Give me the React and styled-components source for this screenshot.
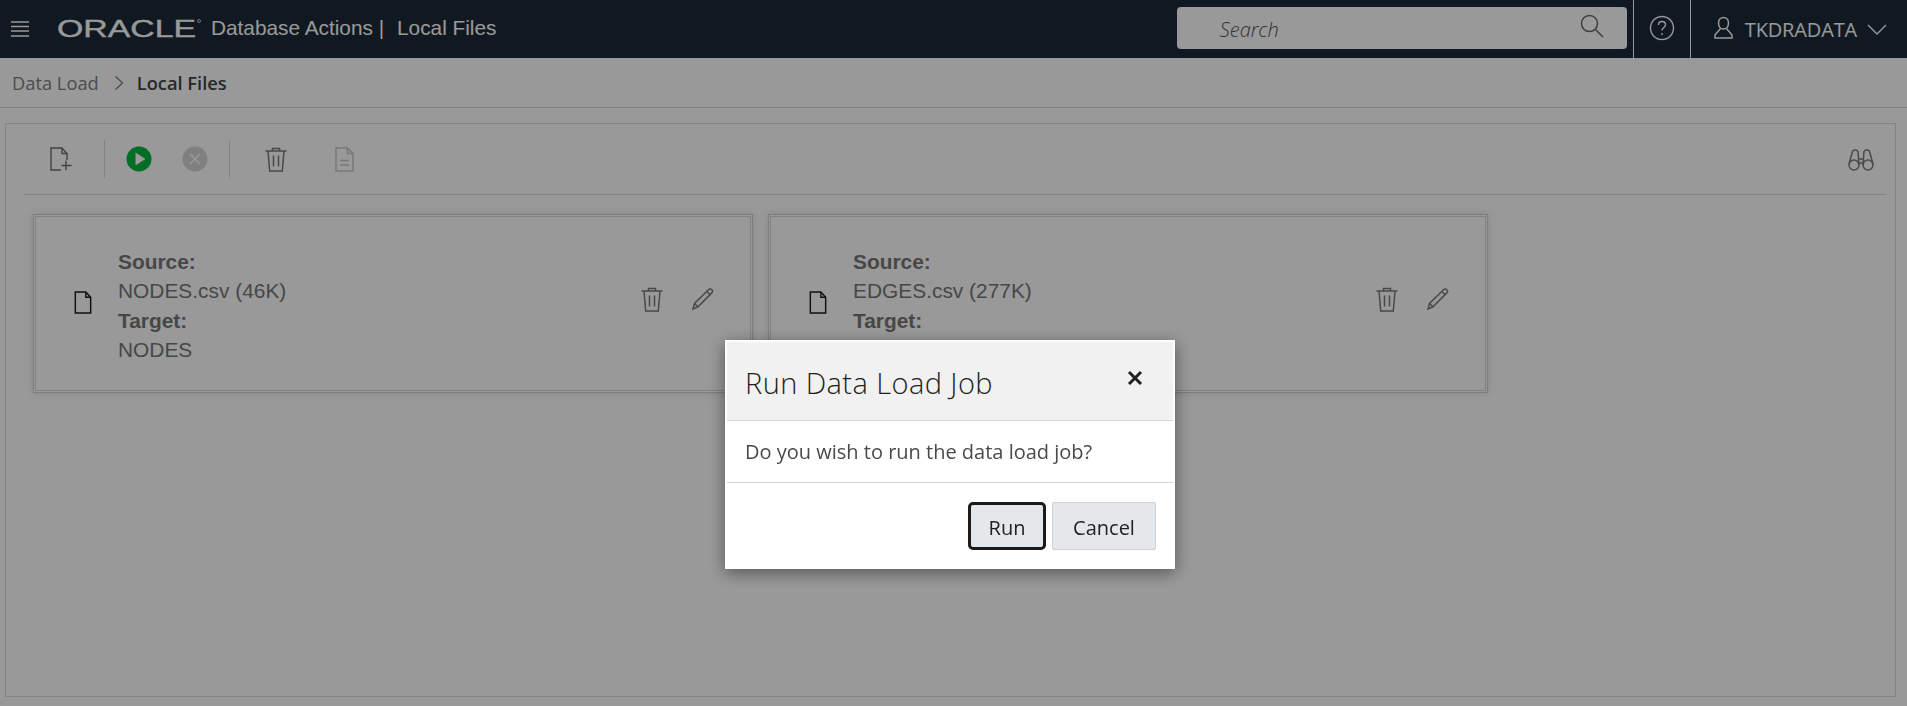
import styled, { createGlobalStyle } from "styled-components";

const GlobalStyle = createGlobalStyle`
    html, body {
        margin: 0;
        padding: 0;
        height: 100%;
        background-color: #fff;
    }
    body {
        font-family: "Open Sans", "Noto Sans", sans-serif;
        overflow: hidden;
    }
    * {
        box-sizing: border-box;
    }
`;

const Page = styled("div")`
    display: flex;
    flex-direction: column;
    height: 706px;
`;

const Header = styled("header")`
    display: flex;
    align-items: center;
    flex: 0 0 58px;
    background-color: #1c2938;
    color: #fff;
`;

const MenuIcon = styled("svg")`
    width: 18px;
    height: 16px;
    margin: 0 28px 0 11px;
`;

const Logo = styled("svg")`
    width: 146px;
    height: 24px;
    margin-right: 8px;
    margin-top: -3px;
`;

const AppTitle = styled("span")`
    font-family: "Liberation Sans", Arial, sans-serif;
    font-size: 20.8px;
    white-space: pre;
    margin-top: -3px;
`;

const PageName = styled("span")`
    margin-left: 13px;
`;

const Spacer = styled("div")`
    flex: 1;
`;

const SearchBox = styled("div")`
    display: flex;
    align-items: center;
    justify-content: space-between;
    width: 450px;
    height: 42px;
    padding: 2px 23px 0 43px;
    margin: -2px 6px 0 0;
    background-color: #fff;
    border-radius: 4px;
    color: #555;
    font-size: 20px;
    font-style: italic;
    font-weight: 300;
`;

const SearchIcon = styled("svg")`
    width: 24px;
    height: 24px;
    margin-top: -6px;
`;

const HeaderCell = styled("div")`
    display: flex;
    align-items: center;
    height: 58px;
    border-left: 1px solid #fff;
    padding: ${(props) => props.$padding};
`;

const HeaderGlyph = styled("svg")`
    margin-top: -2px;
`;

const UserName = styled("span")`
    font-size: 20px;
    margin: 0 10px 0 12px;
    letter-spacing: -0.15px;
`;

const Breadcrumb = styled("nav")`
    display: flex;
    align-items: center;
    flex: 0 0 50px;
    padding: 0 0 0 12px;
    border-bottom: 1px solid #d9d9d9;
    font-size: 18.3px;
`;

const Crumb = styled("span")`
    color: ${(props) => (props.$current ? "#444" : "#808080")};
    font-weight: ${(props) => (props.$current ? 600 : 400)};
`;

const CrumbIcon = styled("svg")`
    width: 10px;
    height: 16px;
    margin: 0 13px 0 15px;
`;

const Panel = styled("main")`
    flex: 1;
    margin: 15px 11px 9px 5px;
    padding: 0 9px 0 17px;
    border: 1px solid #dcdcdc;
`;

const Toolbar = styled("div")`
    display: flex;
    align-items: center;
    height: 71px;
    border-bottom: 1px solid #dcdcdc;
`;

const ToolSlot = styled("div")`
    display: flex;
    align-items: center;
    justify-content: center;
    width: ${(props) => props.$width}px;
    padding-right: ${(props) => props.$right || 0}px;
`;

const ToolDivider = styled("div")`
    width: 1px;
    height: 38px;
    background-color: #dcdcdc;
`;

const Binoculars = styled("svg")`
    width: 26px;
    height: 23px;
    margin-right: 12px;
`;

const CardRow = styled("div")`
    display: flex;
    gap: 15px;
    padding: 19px 0 0 10px;
`;

const Card = styled("section")`
    position: relative;
    display: flex;
    align-items: center;
    width: 720px;
    height: 179px;
    padding: 0 38px 0 40px;
    border: 1px solid #d0d0d0;
    outline: 1px solid #d8d8d8;
    outline-offset: -3px;
    box-shadow: 0 0 8px rgba(0, 0, 0, 0.12);
`;

const DocWrap = styled("div")`
    display: flex;
    margin-top: -2px;
`;

const CardText = styled("div")`
    flex: 1;
    margin: 4px 0 0 26px;
    font-family: "Liberation Sans", Arial, sans-serif;
    font-size: 20.9px;
    line-height: 29.3px;
    color: #777;
`;

const Label = styled("div")`
    font-weight: 700;
    color: #777;
`;

const CardActions = styled("div")`
    display: flex;
    align-items: center;
    gap: 29px;
    margin-top: -9px;
`;

const Overlay = styled("div")`
    position: fixed;
    inset: 0;
    background-color: rgba(0, 0, 0, 0.4);
`;

const Dialog = styled("div")`
    position: fixed;
    left: 725px;
    top: 340px;
    width: 450px;
    height: 229px;
    border: 2px solid #fff;
    background-color: #fff;
    box-shadow: 0 4px 16px rgba(0, 0, 0, 0.45);
    color: #2b2b2b;
`;

const DialogHeader = styled("div")`
    display: flex;
    align-items: center;
    justify-content: space-between;
    height: 79px;
    padding: 2px 30px 0 18px;
    background-color: #f1f1f1;
    border-bottom: 1px solid #d6d6d6;
`;

const DialogTitle = styled("h2")`
    margin: 0;
    font-size: 29px;
    font-weight: 300;
    letter-spacing: 0.42px;
    color: #1f1f1f;
`;

const CloseIcon = styled("svg")`
    width: 16px;
    height: 16px;
    margin-top: -8px;
`;

const DialogBody = styled("div")`
    display: flex;
    align-items: center;
    height: 62px;
    padding-left: 18px;
    border-bottom: 1px solid #d6d6d6;
    font-size: 20px;
    color: #4a4a4a;
`;

const DialogFooter = styled("div")`
    display: flex;
    justify-content: flex-end;
    gap: 6px;
    padding: 19px 17px 0 0;
`;

const DialogButton = styled("button")`
    height: 48px;
    width: ${(props) => props.$width}px;
    padding: 2px 0 0;
    border: ${(props) => (props.$focused ? "3px solid #1b1b1b" : "1px solid #d0d4d8")};
    border-radius: ${(props) => (props.$focused ? "5px" : "2px")};
    background-color: #e4e8eb;
    color: #222;
    font-family: inherit;
    font-size: 20px;
`;

function Doc({ color = "#777" }) {
    return (
        <svg width="18" height="23" viewBox="0 0 18 24" fill="none" stroke={color} strokeWidth="1.5">
            <path d="M1 1h11l5 5.500V23H1z" />
            <path d="M12 1v5.500h5" />
        </svg>
    );
}

function DocPlus() {
    return (
        <svg width="22" height="24" viewBox="0 0 22 24" fill="none" stroke="#6e6e6e" strokeWidth="1.4">
            <path d="M11 23H1V1h11l5 5.500V13" />
            <path d="M12 1v5.500h5M16 13.500v9.500M11.500 18.500h10" />
        </svg>
    );
}

function DocLines() {
    return (
        <svg width="19" height="25" viewBox="0 0 19 25" fill="none" stroke="#c8c8c8" strokeWidth="1.5">
            <path d="M1 1h11.500l5.500 5.500V24H1z" />
            <path d="M12.500 1v5.500H18M5 13.500h9M5 18h9" />
        </svg>
    );
}

function Trash() {
    return (
        <svg width="22" height="25" viewBox="0 0 22 25" fill="none" stroke="#7a7a7a" strokeWidth="1.5">
            <path d="M0.500 4h21M7.500 4V1.500h7V4M3 4l1.700 20h12.600L19 4M8.500 8.500v11M13.500 8.500v11" />
        </svg>
    );
}

function Pencil() {
    return (
        <svg width="22" height="22" viewBox="0 0 22 22" fill="none" stroke="#7a7a7a" strokeWidth="1.5">
            <path d="M1 21l1.500-5.500L16.500 1.800c1-1 2.500-1 3.300-.1.900.9.900 2.300 0 3.200L6 18.800z" />
            <path d="M15 3.500l3.500 3.500M2.500 15.500L6 18.800" />
        </svg>
    );
}

function FileCard({ source, target }) {
    return (
        <Card>
            <DocWrap>
                <Doc color="#1a1a1a" />
            </DocWrap>
            <CardText>
                <Label>Source:</Label>
                <div>{source}</div>
                <Label>Target:</Label>
                <div>{target}</div>
            </CardText>
            <CardActions>
                <Trash />
                <Pencil />
            </CardActions>
        </Card>
    );
}

function App() {
    return (
        <Page>
            <GlobalStyle />
            <Header>
                <MenuIcon viewBox="0 0 18 16" stroke="#fff" strokeWidth="1.3">
                    <path d="M0 1h18M0 5.500h18M0 10h18M0 15h18" />
                </MenuIcon>
                <Logo viewBox="0 0 146 24">
                    <text
                        x="0"
                        y="20.500"
                        fontFamily="'Liberation Sans', Arial, sans-serif"
                        fontSize="23.500"
                        fill="#fff"
                        stroke="#fff"
                        strokeWidth="0.35"
                        textLength="139"
                        lengthAdjust="spacingAndGlyphs"
                    >
                        ORACLE
                    </text>
                    <circle cx="142" cy="5" r="1.500" fill="none" stroke="#fff" strokeWidth="0.7" />
                </Logo>
                <AppTitle>
                    Database Actions |<PageName>Local Files</PageName>
                </AppTitle>
                <Spacer />
                <SearchBox>
                    <span>Search</span>
                    <SearchIcon viewBox="0 0 24 24" fill="none" stroke="#666" strokeWidth="1.5">
                        <circle cx="9.500" cy="9.500" r="8" />
                        <path d="M15.500 15.500L23 23" />
                    </SearchIcon>
                </SearchBox>
                <HeaderCell $padding="0 15px 0 15px">
                    <HeaderGlyph width="26" height="26" viewBox="0 0 26 26" fill="none" stroke="#fff" strokeWidth="1.4">
                        <circle cx="13" cy="13" r="11.500" />
                        <path d="M9.500 10c0-2 1.500-3.500 3.500-3.500s3.500 1.500 3.500 3.300c0 2.700-3.500 2.700-3.500 5.700" />
                        <path d="M13 18v2" />
                    </HeaderGlyph>
                </HeaderCell>
                <HeaderCell $padding="0 20px 0 23px">
                    <HeaderGlyph width="19" height="24" viewBox="0 0 19 24" fill="none" stroke="#fff" strokeWidth="1.5">
                        <path d="M9.500 1.500c3 0 5 2.300 5 5.500s-2 6-5 6-5-2.800-5-6 2-5.500 5-5.500z" />
                        <path d="M6.500 12.500L1 19v3h17v-3l-5.500-6.500" />
                    </HeaderGlyph>
                    <UserName>TKDRADATA</UserName>
                    <svg width="20" height="11" viewBox="0 0 20 11" fill="none" stroke="#fff" strokeWidth="1.4">
                        <path d="M1 1l9 9 9-9" />
                    </svg>
                </HeaderCell>
            </Header>
            <Breadcrumb>
                <Crumb>Data Load</Crumb>
                <CrumbIcon viewBox="0 0 10 16" fill="none" stroke="#777" strokeWidth="1.2">
                    <path d="M1.500 1.500L8.500 8l-7 6.500" />
                </CrumbIcon>
                <Crumb $current>Local Files</Crumb>
            </Breadcrumb>
            <Panel>
                <Toolbar>
                    <ToolSlot $width={81} $right={6}>
                        <DocPlus />
                    </ToolSlot>
                    <ToolDivider />
                    <ToolSlot $width={68}>
                        <svg width="26" height="26" viewBox="0 0 26 26">
                            <circle cx="13" cy="13" r="12.500" fill="#00b83e" />
                            <path d="M9.500 6.500L19.500 13l-10 6.500z" fill="#fff" />
                        </svg>
                    </ToolSlot>
                    <ToolSlot $width={56} $right={12}>
                        <svg width="26" height="26" viewBox="0 0 26 26">
                            <circle cx="13" cy="13" r="12.500" fill="#d6d6d6" />
                            <path d="M8 8l10 10M18 8L8 18" stroke="#fff" strokeWidth="1.4" />
                        </svg>
                    </ToolSlot>
                    <ToolDivider />
                    <ToolSlot $width={92}>
                        <Trash />
                    </ToolSlot>
                    <ToolSlot $width={44}>
                        <DocLines />
                    </ToolSlot>
                    <Spacer />
                    <Binoculars viewBox="0 0 26 23" fill="none" stroke="#7a7a7a" strokeWidth="1.5">
                        <circle cx="6" cy="17" r="5" />
                        <circle cx="20" cy="17" r="5" />
                        <path d="M1 16L4.500 3.500C5 1.500 9 1.500 10 3.500L11 17M25 16L21.500 3.500C21 1.500 17 1.500 16 3.500L15 17M11 11h4M11 15h4" />
                    </Binoculars>
                </Toolbar>
                <CardRow>
                    <FileCard source="NODES.csv (46K)" target="NODES" />
                    <FileCard source="EDGES.csv (277K)" target="EDGES" />
                </CardRow>
            </Panel>
            <Overlay />
            <Dialog>
                <DialogHeader>
                    <DialogTitle>Run Data Load Job</DialogTitle>
                    <CloseIcon viewBox="0 0 16 16" stroke="#222" strokeWidth="3">
                        <path d="M2 2l12 12M14 2L2 14" />
                    </CloseIcon>
                </DialogHeader>
                <DialogBody>Do you wish to run the data load job?</DialogBody>
                <DialogFooter>
                    <DialogButton $focused $width={78}>
                        Run
                    </DialogButton>
                    <DialogButton $width={104}>Cancel</DialogButton>
                </DialogFooter>
            </Dialog>
        </Page>
    );
}

export default App;
